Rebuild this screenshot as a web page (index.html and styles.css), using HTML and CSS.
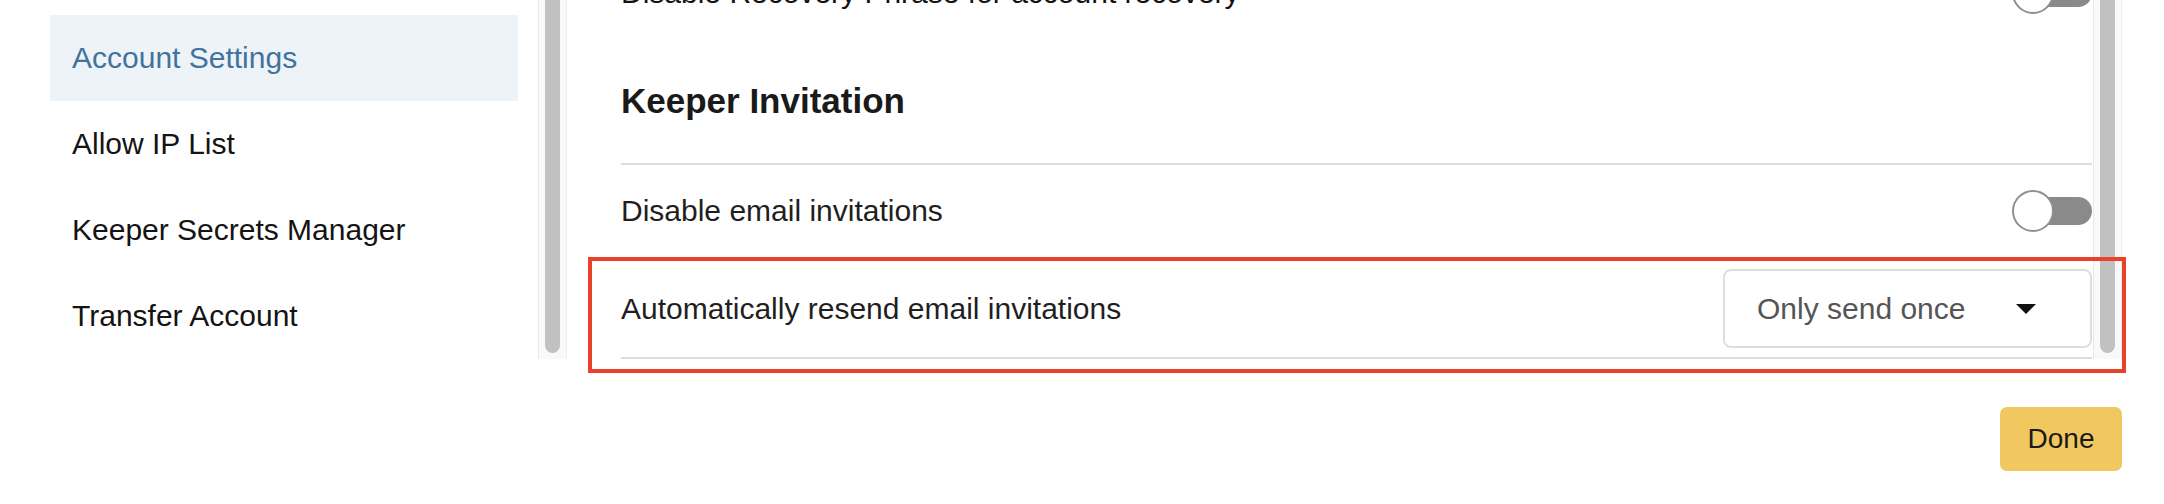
FILE: index.html
```html
<!DOCTYPE html>
<html lang="en">
<head>
<meta charset="utf-8">
<title>Account Settings</title>
<link rel="stylesheet" href="styles.css">
</head>
<body>
<div class="page">
  <div class="top">
    <nav class="sidebar">
      <div class="nav-item active">Account Settings</div>
      <div class="nav-item">Allow IP List</div>
      <div class="nav-item">Keeper Secrets Manager</div>
      <div class="nav-item">Transfer Account</div>
    </nav>
    <div class="scrollbar side-scroll"><div class="thumb"></div></div>
    <main class="main">
      <div class="main-scroll">
        <div class="content">
          <div class="row row-first">
            <span class="label">Disable Recovery Phrase for account recovery</span>
            <span class="toggle"><span class="track"></span><span class="knob"></span></span>
          </div>
          <h2 class="section-title">Keeper Invitation</h2>
          <div class="row row-toggle">
            <span class="label">Disable email invitations</span>
            <span class="toggle"><span class="track"></span><span class="knob"></span></span>
          </div>
          <div class="row row-select">
            <span class="label">Automatically resend email invitations</span>
            <div class="select">
              <span class="select-text">Only send once</span>
              <span class="caret"></span>
            </div>
          </div>
        </div>
      </div>
      <div class="scrollbar main-scrollbar"><div class="thumb"></div></div>
      <div class="highlight"></div>
    </main>
  </div>
  <div class="footer">
    <button class="done">Done</button>
  </div>
</div>
</body>
</html>
```

FILE: styles.css
```css
* { box-sizing: border-box; }

html, body {
  margin: 0;
  padding: 0;
  background: #ffffff;
}

body {
  font-family: "Liberation Sans", Arial, sans-serif;
  color: #1f1f1f;
  width: 2164px;
  height: 504px;
  overflow: hidden;
}

.top {
  display: flex;
  height: 359px;
  padding-left: 50px;
  padding-right: 42px;
}

/* Sidebar */
.sidebar {
  width: 468px;
  padding-top: 15px;
  flex-shrink: 0;
}

.nav-item {
  height: 86px;
  display: flex;
  align-items: center;
  padding-left: 22px;
  font-size: 30px;
  line-height: 34px;
  color: #141414;
}

.nav-item.active {
  background: #eef3f7;
  color: #41739e;
}

/* Fake scrollbars */
.scrollbar {
  width: 29px;
  flex-shrink: 0;
  background: #f9f9f9;
  border-left: 1px solid #e9e9e9;
  border-right: 1px solid #eeeeee;
  padding: 0 6px 6px 6px;
  display: flex;
}

.thumb {
  flex: 1;
  background: #c1c1c1;
  border-radius: 0 0 8px 8px;
}

.side-scroll {
  margin-left: 20px;
}

/* Main panel */
.main {
  position: relative;
  flex: 1;
  display: flex;
  margin-left: 54px;
}

.main-scroll {
  flex: 1;
  overflow: hidden;
  padding-right: 1px;
}

.content {
  margin-top: -47px;
}

.row {
  display: flex;
  align-items: center;
  justify-content: space-between;
}

.label {
  font-size: 30px;
  line-height: 34px;
  color: #1f1f1f;
}

.row-first {
  height: 80px;
}

.row-first .label {
  color: #121212;
}

.section-title {
  margin: 0;
  font-size: 35px;
  line-height: 40px;
  font-weight: bold;
  color: #1a1a1a;
  padding-top: 48px;
  padding-bottom: 42px;
  border-bottom: 2px solid #dddddd;
}

.row-toggle {
  height: 94px;
  border-bottom: 2px solid #dddddd;
}

.row-select {
  padding: 10px 0 9px;
  border-bottom: 2px solid #dddddd;
}

/* Toggle switch */
.toggle {
  position: relative;
  width: 80px;
  height: 42px;
  flex-shrink: 0;
}

.toggle .track {
  position: absolute;
  left: 20px;
  right: 0;
  top: 7px;
  height: 28px;
  border-radius: 14px;
  background: #8a8a8a;
}

.toggle .knob {
  position: absolute;
  left: 0;
  top: 0;
  width: 42px;
  height: 42px;
  border-radius: 50%;
  background: #ffffff;
  border: 2px solid #8f8f8f;
}

/* Select */
.select {
  width: 369px;
  height: 79px;
  border: 2px solid #dedede;
  border-radius: 8px;
  display: flex;
  align-items: center;
  justify-content: space-between;
  padding-left: 32px;
  padding-right: 54px;
}

.select-text {
  font-size: 30px;
  line-height: 34px;
  color: #555555;
}

.caret {
  width: 0;
  height: 0;
  border-left: 10px solid transparent;
  border-right: 10px solid transparent;
  border-top: 10px solid #111111;
}

/* Annotation overlay */
.highlight {
  position: absolute;
  left: -33px;
  right: -4px;
  top: 257px;
  height: 116px;
  border: 4px solid #e9412a;
  pointer-events: none;
}

/* Footer */
.footer {
  display: flex;
  justify-content: flex-end;
  padding-right: 42px;
  margin-top: 48px;
}

.done {
  width: 122px;
  height: 64px;
  border: none;
  border-radius: 7px;
  background: #f0c85f;
  color: #1a1a1a;
  font-family: "Liberation Sans", Arial, sans-serif;
  font-size: 28px;
  padding: 0;
}
```
